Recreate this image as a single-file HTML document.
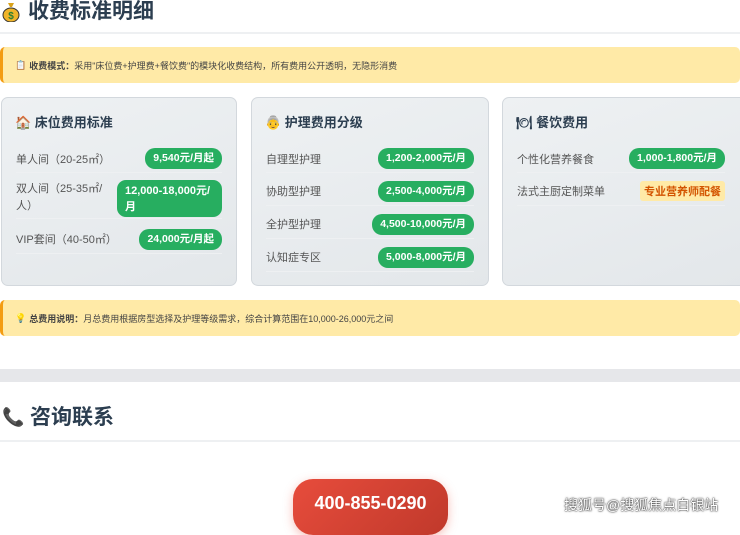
<!DOCTYPE html>
<html><head><meta charset="utf-8"><style>
*{margin:0;padding:0;box-sizing:border-box}
body{width:740px;height:522px;overflow:hidden;background:#fff;font-family:"Liberation Sans","Noto Sans CJK SC",sans-serif;position:relative;color:#34495e}
.a{position:absolute}
.h{font-size:21px;font-weight:bold;color:#2c3e50;line-height:24px}
.line{height:2px;background:#eef0f2;left:0;width:740px}
.ban{left:0;width:740px;background:#ffeaa7;border-left:3px solid #f39c12;border-radius:5px;font-size:9px;color:#444;padding-left:12px;display:flex;align-items:center}
.card{top:97px;height:189px;border:1px solid #d3d8dd;border-radius:7px;background:linear-gradient(160deg,#eef1f3,#e3e7ea)}
.ct{font-size:13px;font-weight:bold;color:#2c3e50}
.row{position:absolute;left:14px;right:14px;border-bottom:1px solid #eef0f2;font-size:11px;color:#555;display:flex;justify-content:space-between;align-items:center}
.pill{background:#27ae60;color:#fff;font-weight:bold;font-size:10.5px;border-radius:10px;height:21px;line-height:21px;padding:0 8px;white-space:nowrap}
</style></head><body>
<div class="a" style="left:2px;top:2px;width:18px;height:20px">
<svg width="18" height="20" viewBox="0 0 18 20"><path d="M6 1h6l-2 4h-2z" fill="#d9a21b"/><ellipse cx="9" cy="13" rx="8" ry="7" fill="#f0b429" stroke="#333" stroke-width="1"/><text x="9" y="17" font-size="10" text-anchor="middle" fill="#2e7d32" font-weight="bold">$</text></svg></div>
<div class="a h" style="left:28px;top:0px">收费标准明细</div>
<div class="a line" style="top:32px"></div>
<div class="a ban" style="top:47px;height:36px"><span style="margin-right:3px">📋</span><b>收费模式：</b>采用"床位费+护理费+餐饮费"的模块化收费结构，所有费用公开透明，无隐形消费</div>

<div class="a card" style="left:1px;width:236px">
<div class="a ct" style="left:13px;top:14px">🏠 床位费用标准</div>
<div class="row" style="top:47px;height:28px"><span>单人间（20-25㎡）</span><span class="pill">9,540元/月起</span></div>
<div class="row" style="top:80px;height:41px"><span style="line-height:17px">双人间（25-35㎡/<br>人）</span><span class="pill" style="height:37px;line-height:16px;padding:3px 8px;border-radius:9px;width:105px;white-space:normal;font-size:11px;word-break:break-all">12,000-18,000元/月</span></div>
<div class="row" style="top:127px;height:29px"><span>VIP套间（40-50㎡）</span><span class="pill">24,000元/月起</span></div>
</div>

<div class="a card" style="left:251px;width:238px">
<div class="a ct" style="left:13px;top:14px">👵 护理费用分级</div>
<div class="row" style="top:47px;height:28px"><span>自理型护理</span><span class="pill">1,200-2,000元/月</span></div>
<div class="row" style="top:79px;height:29px"><span>协助型护理</span><span class="pill">2,500-4,000元/月</span></div>
<div class="row" style="top:112px;height:29px"><span>全护型护理</span><span class="pill">4,500-10,000元/月</span></div>
<div class="row" style="top:145px;height:29px"><span>认知症专区</span><span class="pill">5,000-8,000元/月</span></div>
</div>

<div class="a card" style="left:502px;width:245px">
<div class="a ct" style="left:13px;top:14px">🍽 餐饮费用</div>
<div class="row" style="top:47px;height:28px;right:21px"><span>个性化营养餐食</span><span class="pill">1,000-1,800元/月</span></div>
<div class="row" style="top:79px;height:29px;right:21px"><span>法式主厨定制菜单</span><span style="background:#ffeaa7;color:#d35400;font-weight:bold;font-size:11px;padding:2px 4px;border-radius:3px">专业营养师配餐</span></div>
</div>

<div class="a ban" style="top:300px;height:36px"><span style="margin-right:3px">💡</span><b>总费用说明：</b>月总费用根据房型选择及护理等级需求，综合计算范围在10,000-26,000元之间</div>

<div class="a" style="left:0;top:369px;width:740px;height:13px;background:#e6e7ea"></div>
<div class="a" style="left:2px;top:407px;font-size:18px;color:#c0392b">📞</div>
<div class="a h" style="left:30px;top:406px">咨询联系</div>
<div class="a line" style="top:440px"></div>

<div class="a" style="left:293px;top:479px;width:155px;height:56px;border-radius:20px;background:linear-gradient(135deg,#e74c3c,#c0392b);box-shadow:0 3px 10px rgba(231,76,60,.35);color:#fff;font-weight:bold;font-size:18px;text-align:center;line-height:48px">400-855-0290</div>
<div class="a" style="left:564px;top:495px;font-size:14px;color:#fff;text-shadow:0 0 2px #333,0 0 1px #000">搜狐号@搜狐焦点白银站</div>
</body></html>
